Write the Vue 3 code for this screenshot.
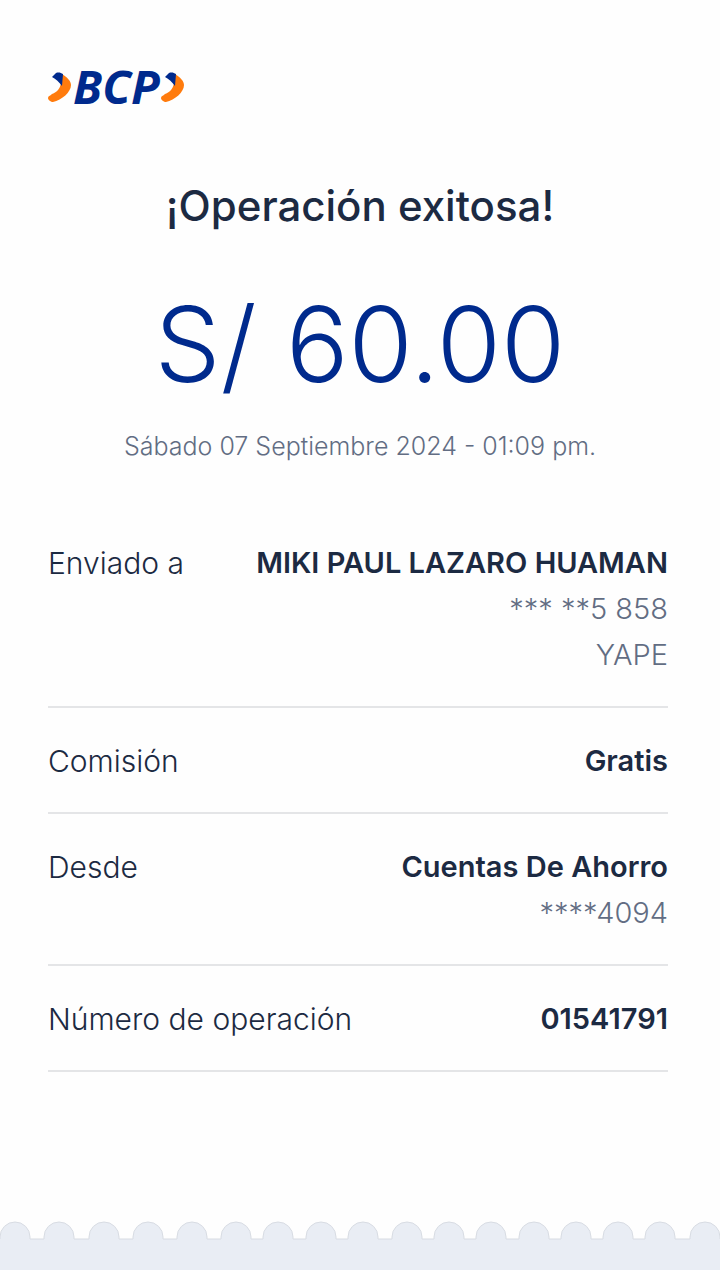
<script setup>
const receipt = {
    title: "¡Operación exitosa!",
    amount: "S/ 60.00",
    date: "Sábado 07 Septiembre 2024 - 01:09 pm."
};

const rows = [
    { label: "Enviado a", value: "MIKI PAUL LAZARO HUAMAN", details: ["*** **5 858", "YAPE"] },
    { label: "Comisión", value: "Gratis", details: [] },
    { label: "Desde", value: "Cuentas De Ahorro", details: ["****4094"] },
    { label: "Número de operación", value: "01541791", details: [] }
];

const scallops = [15, 59, 104, 148, 192, 236, 278, 321, 363, 407, 449, 491, 534, 576, 618, 660, 705];

// both chevrons of the logo share one shape
const chevrons = [0, 113];

// scalloped top edge of the footer, left to right
const edge = scallops.map((x) => `L${x - 15} 19V17A15 15 0 0 1 ${x + 15} 17V19`).join("");
</script>

<template>
  <main class="receipt">
    <header class="receipt__header">
      <svg class="logo" viewBox="0 -20 138 78" role="img" aria-label="BCP">
        <g v-for="x in chevrons" :key="x" :transform="`translate(${x} 0)`">
          <path class="logo__orange" d="M14 6C19 9 23 13 23 17C23 24 14 32 5 34C3 34 0 32 0 30C0 28 2 28 4 26C9 24 12 21 13 15Z" />
          <path class="logo__blue" d="M4 9L8 5C11 4 13 5 15 6L14 18C11 14 8 11 4 9Z" />
        </g>
        <text class="logo__text" x="25" y="36">BCP</text>
      </svg>
    </header>

    <section class="summary">
      <h1 class="summary__title">{{ receipt.title }}</h1>
      <p class="summary__amount">{{ receipt.amount }}</p>
      <p class="summary__date">{{ receipt.date }}</p>
    </section>

    <dl class="details">
      <div v-for="row in rows" :key="row.label" class="details__row">
        <dt class="details__label">{{ row.label }}</dt>
        <dd class="details__values">
          <strong class="details__value">{{ row.value }}</strong>
          <span v-for="detail in row.details" :key="detail" class="details__extra">{{ detail }}</span>
        </dd>
      </div>
    </dl>

    <footer class="receipt__footer">
      <svg class="receipt__edge" viewBox="0 0 720 50" aria-hidden="true">
        <path :d="`M-4 54V19${edge}H724V54Z`" />
      </svg>
    </footer>
  </main>
</template>

<style>
body {
  margin: 0;
  background: #fefefe;
}
</style>

<style scoped>
.receipt {
  display: flex;
  flex-direction: column;
  min-height: 100vh;
  color: #1c2a42;
  font-family: Inter, "Open Sans", sans-serif;
  font-weight: 300;
}

.receipt__header {
  padding: 48px 48px 0;
}

.logo {
  display: block;
  width: 138px;
  height: 78px;
}

.logo__orange {
  fill: #ff7b0d;
}

.logo__blue {
  fill: #002a8d;
}

.logo__text {
  fill: #002a8d;
  font-family: "Open Sans", sans-serif;
  font-size: 47px;
  font-style: italic;
  font-weight: 700;
}

.summary {
  padding: 50px 48px 0;
  text-align: center;
}

.summary__title {
  margin: 0;
  font-size: 42px;
  font-weight: 500;
  line-height: 60px;
}

.summary__amount {
  margin: 48px 0 0;
  color: #002a8d;
  font-size: 104px;
  line-height: 120px;
}

.summary__date {
  margin: 24px 0 0;
  color: #626d83;
  font-size: 25px;
  line-height: 36px;
}

.details {
  margin: 46px 52px 0 48px;
  font-size: 30px;
  line-height: 46px;
}

.details__row {
  display: flex;
  justify-content: space-between;
  gap: 24px;
  padding: 30px 0 28px;
  border-bottom: 2px solid #e4e5e7;
}

.details__values {
  display: flex;
  flex-direction: column;
  margin: 0;
  font-size: 29px;
  text-align: right;
}

.details__value {
  font-weight: 600;
}

.details__extra {
  color: #626d83;
}

.receipt__footer {
  margin-top: auto;
}

.receipt__edge {
  display: block;
  width: 100%;
  fill: #e9edf4;
  stroke: #d8dce3;
  stroke-width: 1;
}
</style>
